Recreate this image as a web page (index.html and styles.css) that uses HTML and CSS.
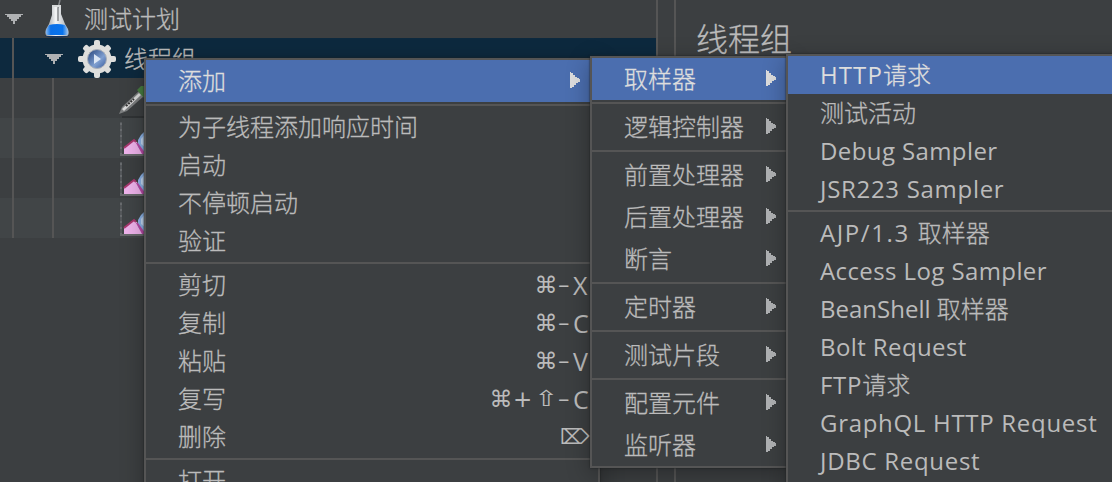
FILE: index.html
```html
<!DOCTYPE html>
<html lang="zh-CN">
<head>
  <meta charset="UTF-8">
  <meta name="viewport" content="width=device-width, initial-scale=1.0">
  <title>线程组</title>
  <link rel="stylesheet" href="styles.css">
</head>
<body>
  <!-- Shared icons -->
  <svg class="defs" width="0" height="0">
    <symbol id="arrow" viewBox="0 0 10 16">
      <path d="M0 0h1v1h2v2h2v2h2v1h2v1h1v3H8v1H6v2H4v2H2v1H0z"/>
    </symbol>
    <symbol id="expand" viewBox="0 0 18 10">
      <path d="M0 0h18v1h-2v2h-2v2h-2v2h-2v3H8V7H6V5H4V3H2V1H0z"/>
    </symbol>
    <symbol id="graph" viewBox="0 0 36 36">
      <path d="M3 0v33" fill="none" stroke="#55585b" stroke-width="2"/>
      <path d="M3 1v32" fill="none" stroke="#686b6e" stroke-width="2" stroke-dasharray="2 4"/>
      <path d="M2 33h34" stroke="#67686b" stroke-width="2"/>
      <path d="M6 32v-6l10-8 5 4 6 10z" fill="#efb3ec"/>
      <path d="M6 26l5-4 5-4 2 2" fill="none" stroke="#a9386f" stroke-width="2"/>
      <path d="M20 25v-7l3-5 7-7v26h-3z" fill="#8db4e8"/>
      <path d="M23 22v-5l5-6v15z" fill="#c3d8f3"/>
      <path d="M18 21h2l8 11h-4z" fill="#b54aa5"/>
    </symbol>
  </svg>

  <div class="window">
    <div class="tree">
      <div class="row root">
        <svg class="expand"><use href="#expand"/></svg>
        <svg class="flask" viewBox="0 0 24 38">
          <defs>
            <linearGradient id="glass">
              <stop offset="0" stop-color="#8f9499"/>
              <stop offset=".45" stop-color="#f4f5f6"/>
              <stop offset="1" stop-color="#a4abb2"/>
            </linearGradient>
            <linearGradient id="liquid">
              <stop offset="0" stop-color="#8cbcf0"/>
              <stop offset=".22" stop-color="#0b6fe6"/>
              <stop offset=".75" stop-color="#0874ee"/>
              <stop offset="1" stop-color="#a9c8ea"/>
            </linearGradient>
          </defs>
          <ellipse cx="12" cy="35.5" rx="12" ry="2" fill="#17345c"/>
          <path d="M7 6h9v8l4 10 3 5q2 7-2 7H3q-4 0-2-7l3-5 3-9z" fill="url(#glass)"/>
          <path d="M4 25q8-2 16 0l3 5q1 5-2 5H3q-3 0-2-5z" fill="url(#liquid)"/>
          <path d="M15 0l-2 8v13" fill="none" stroke="#85888b" stroke-width="1.5"/>
          <path d="M7 6h9" stroke="#d7d9da" stroke-width="2"/>
        </svg>
        <span>测试计划</span>
      </div>
      <div class="row group selected">
        <svg class="expand"><use href="#expand"/></svg>
        <svg class="gear" viewBox="0 0 38 38">
          <defs>
            <linearGradient id="lens" x1="0" y1="0" x2="1" y2="1">
              <stop offset="0" stop-color="#24427a"/>
              <stop offset=".6" stop-color="#7f9fd0"/>
              <stop offset="1" stop-color="#36599b"/>
            </linearGradient>
          </defs>
          <g fill="#dededc">
            <circle cx="19" cy="19" r="14.5"/>
            <rect x="16" y="0" width="6" height="38" rx="2"/>
            <rect x="16" y="1" width="6" height="36" rx="2" transform="rotate(45 19 19)"/>
            <rect x="16" y="0" width="6" height="38" rx="2" transform="rotate(90 19 19)"/>
            <rect x="16" y="1" width="6" height="36" rx="2" transform="rotate(135 19 19)"/>
          </g>
          <circle cx="19" cy="19" r="9.5" fill="url(#lens)" stroke="#a9afb8"/>
          <path d="M16 14l7 5-7 5z" fill="#dbe6f5"/>
        </svg>
        <span>线程组</span>
      </div>
      <div class="row leaf">
        <svg class="pipette" viewBox="0 0 36 36">
          <path d="M4 35h32" stroke="#303335" stroke-width="2"/>
          <path d="M1 32l3-7L21 9l5 5L9 29z" fill="#7c7e7f"/>
          <path d="M5 28L22 12" stroke="#dcdcdc" stroke-width="3"/>
          <path d="M8 24l8-7" stroke="#333" stroke-width="2" stroke-dasharray="2 1"/>
          <path d="M19 8l4-4h6v12h-3z" fill="#477d40"/>
        </svg>
      </div>
      <div class="row leaf alt"><svg class="graph"><use href="#graph"/></svg></div>
      <div class="row leaf"><svg class="graph"><use href="#graph"/></svg></div>
      <div class="row leaf alt"><svg class="graph"><use href="#graph"/></svg></div>
    </div>
    <div class="divider"></div>
    <div class="panel"><h1>线程组</h1></div>
  </div>

  <!-- Thread group context menu -->
  <div class="menu menu-main">
    <div class="item tall active">添加<svg class="arrow"><use href="#arrow"/></svg></div>
    <div class="separator"></div>
    <div class="item">为子线程添加响应时间</div>
    <div class="item">启动</div>
    <div class="item">不停顿启动</div>
    <div class="item">验证</div>
    <div class="separator"></div>
    <div class="item">剪切<span class="keys"><i>⌘</i><b>–</b><span>X</span></span></div>
    <div class="item">复制<span class="keys"><i>⌘</i><b>–</b><span>C</span></span></div>
    <div class="item">粘贴<span class="keys"><i>⌘</i><b>–</b><span>V</span></span></div>
    <div class="item">复写<span class="keys"><i>⌘</i><b class="plus">+</b><i class="shift">⇧</i><b>–</b><span>C</span></span></div>
    <div class="item">删除<span class="keys"><span class="del">⌦</span></span></div>
    <div class="separator"></div>
    <div class="item">打开</div>
  </div>

  <!-- Add submenu -->
  <div class="menu menu-add">
    <div class="item tall active">取样器<svg class="arrow"><use href="#arrow"/></svg></div>
    <div class="separator"></div>
    <div class="item tall">逻辑控制器<svg class="arrow"><use href="#arrow"/></svg></div>
    <div class="separator"></div>
    <div class="item tall">前置处理器<svg class="arrow"><use href="#arrow"/></svg></div>
    <div class="item tall">后置处理器<svg class="arrow"><use href="#arrow"/></svg></div>
    <div class="item tall">断言<svg class="arrow"><use href="#arrow"/></svg></div>
    <div class="separator"></div>
    <div class="item tall">定时器<svg class="arrow"><use href="#arrow"/></svg></div>
    <div class="separator"></div>
    <div class="item tall">测试片段<svg class="arrow"><use href="#arrow"/></svg></div>
    <div class="separator"></div>
    <div class="item tall">配置元件<svg class="arrow"><use href="#arrow"/></svg></div>
    <div class="item tall">监听器<svg class="arrow"><use href="#arrow"/></svg></div>
  </div>

  <!-- Sampler submenu -->
  <div class="menu menu-sampler">
    <div class="item active"><span class="en wide">HTTP</span>请求</div>
    <div class="item">测试活动</div>
    <div class="item"><span class="en">Debug Sampler</span></div>
    <div class="item"><span class="en caps">JSR223 Sampler</span></div>
    <div class="separator"></div>
    <div class="item"><span class="en version">AJP/1.3&nbsp;</span>取样器</div>
    <div class="item"><span class="en">Access Log Sampler</span></div>
    <div class="item"><span class="en tight">BeanShell&nbsp;</span>取样器</div>
    <div class="item"><span class="en">Bolt Request</span></div>
    <div class="item"><span class="en caps">FTP</span>请求</div>
    <div class="item"><span class="en caps">GraphQL HTTP Request</span></div>
    <div class="item"><span class="en caps">JDBC Request</span></div>
  </div>
</body>
</html>
```
FILE: styles.css
```css
* {
  margin: 0;
  padding: 0;
  box-sizing: border-box;
}

html {
  overflow: hidden;
}

body {
  width: 1112px;
  height: 482px;
  overflow: hidden;
  position: relative;
  background-color: #3c3f41;
  color: #bbbbbb;
  font-family: "Open Sans", "Noto Sans CJK SC", sans-serif;
  font-size: 24px;
  font-weight: 300;
  -webkit-text-stroke: 0.3px;
}

svg {
  display: block;
  flex-shrink: 0;
}

.defs {
  position: absolute;
}

.window {
  display: flex;
  height: 482px;
}

/* Test plan tree */
.tree {
  width: 656px;
}

.row {
  display: flex;
  align-items: center;
  height: 40px;
  line-height: 38px;
}

.row.root {
  height: 38px;
  padding-left: 5px;
}

.row.group {
  padding-top: 2px;
  padding-left: 45px;
}

.row:not(.root) {
  background-image: linear-gradient(#555555, #555555);
  background-repeat: no-repeat;
  background-size: 2px 100%;
  background-position: 12px 0;
}

.row.leaf {
  padding-top: 4px;
  padding-left: 118px;
  background-image: linear-gradient(#555555, #555555), linear-gradient(#555555, #555555);
  background-position: 12px 0, 52px 0;
}

.row.selected {
  background-color: #0d293e;
}

.row.alt {
  background-color: #414547;
}

.expand {
  width: 18px;
  height: 10px;
  fill: #afb1b3;
}

.flask {
  width: 24px;
  height: 38px;
  margin: 0 15px 0 22px;
}

.gear {
  width: 38px;
  height: 38px;
  margin: 0 8px 0 15px;
}

.pipette,
.graph {
  width: 36px;
  height: 36px;
}

/* Split pane divider */
.divider {
  width: 20px;
  border-left: 2px solid #555555;
  border-right: 2px solid #555555;
}

.panel {
  flex: 1;
  padding: 15px 20px;
}

.panel h1 {
  font-size: 32px;
  font-weight: 300;
  line-height: 48px;
}

/* Popup menus */
.menu {
  position: absolute;
  background-color: #3c3f41;
  border: 2px solid #555555;
  box-shadow: 0 0 2px #1e2021, 0 6px 22px rgba(0, 0, 0, 0.3);
}

.menu-main {
  left: 144px;
  top: 58px;
  width: 456px;
  height: 460px;
}

.menu-add {
  left: 590px;
  top: 56px;
  width: 200px;
}

.menu-sampler {
  left: 786px;
  top: 54px;
  width: 360px;
  height: 460px;
}

.item {
  display: flex;
  align-items: center;
  height: 38px;
  padding-left: 32px;
  line-height: 38px;
  white-space: nowrap;
}

.item.tall {
  height: 42px;
}

.item.active {
  background-color: #4b6eaf;
  color: #dddddd;
}

.separator {
  height: 6px;
  border: solid #3c3f41;
  border-width: 2px 0;
  background-color: #555555;
}

.arrow {
  width: 10px;
  height: 16px;
  margin-left: auto;
  margin-right: 18px;
  margin-bottom: 2px;
  fill: #afb1b3;
}

.menu-add .arrow {
  margin-right: 12px;
}

.active .arrow {
  fill: #dddddd;
}

.en {
  font-weight: 400;
  letter-spacing: 0.4px;
  -webkit-text-stroke: 0;
}

.en.caps {
  letter-spacing: 0.7px;
}

.en.wide {
  letter-spacing: 1.1px;
}

.en.version {
  letter-spacing: 1.6px;
}

.en.tight {
  letter-spacing: 0;
}

/* Keyboard shortcuts */
.keys {
  display: flex;
  margin-left: auto;
  margin-right: 8px;
  font-family: "DejaVu Sans", sans-serif;
  font-weight: 400;
  -webkit-text-stroke: 0;
}

.keys i,
.keys b {
  width: 24px;
  font-size: 23px;
  font-style: normal;
  font-weight: 400;
  text-align: center;
}

.keys i.shift {
  font-size: 22px;
  transform: scaleX(1.3);
}

.keys b {
  width: 15px;
  text-align: left;
}

.keys b.plus {
  width: 21px;
}

.keys span {
  width: 17px;
  font-family: "Open Sans", sans-serif;
  font-size: 25px;
}

.keys .del {
  width: 30px;
  font-family: "DejaVu Sans", sans-serif;
  font-size: 21px;
}
```
